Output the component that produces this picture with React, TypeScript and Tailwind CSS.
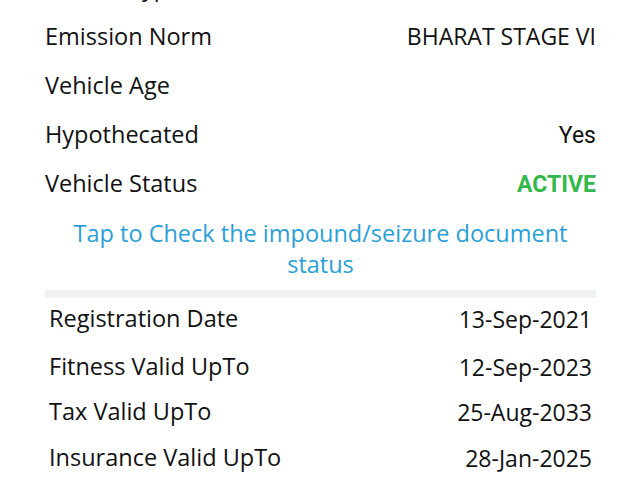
import React from "react";

const os = { fontFamily: '"Open Sans", sans-serif' };
const rb = { fontFamily: 'Roboto, sans-serif' };

function Row({ label, value, valueClass = "", valueFont = os, h = "h-[49px]" }: { label: string; value?: string; valueClass?: string; valueFont?: React.CSSProperties; h?: string }) {
  return (
    <div className={`flex items-center justify-between ${h}`}>
      <span style={os} className="text-[23.5px] text-[#111]">{label}</span>
      {value && <span style={valueFont} className={`text-[23px] ${valueClass}`}>{value}</span>}
    </div>
  );
}

export default function App() {
  return (
    <div className="w-[640px] h-[480px] overflow-hidden bg-white">
      <div className="pl-[45px] pr-[44px] mt-[-37px]">
        <Row label="Vehicle Type" />
        <Row label="Emission Norm" value="BHARAT STAGE VI" valueClass="text-[#111]" />
        <Row label="Vehicle Age" />
        <Row label="Hypothecated" value="Yes" valueClass="text-[#111] pt-[4px]" valueFont={rb} />
        <Row label="Vehicle Status" value="ACTIVE" valueClass="font-bold text-[#33b84a] pt-[4px]" valueFont={rb} />
        <div style={os} className="mt-[10px] text-center text-[23.5px] leading-[31px] text-[#2a9fd8] px-[10px]">
          Tap to Check the impound/seizure document status
        </div>
        <div className="mt-[10px] h-[8px] bg-[#eef2f5]" />
        <div className="pl-[4px] pr-[4px]">
          <Row label="Registration Date" value="13-Sep-2021" valueClass="text-[#111]" h="h-[42px]" />
          <Row label="Fitness Valid UpTo" value="12-Sep-2023" valueClass="text-[#111]" h="h-[54px]" />
          <Row label="Tax Valid UpTo" value="25-Aug-2033" valueClass="text-[#111]" h="h-[36px]" />
          <Row label="Insurance Valid UpTo" value="28-Jan-2025" valueClass="text-[#111]" h="h-[56px]" />
        </div>
      </div>
    </div>
  );
}
